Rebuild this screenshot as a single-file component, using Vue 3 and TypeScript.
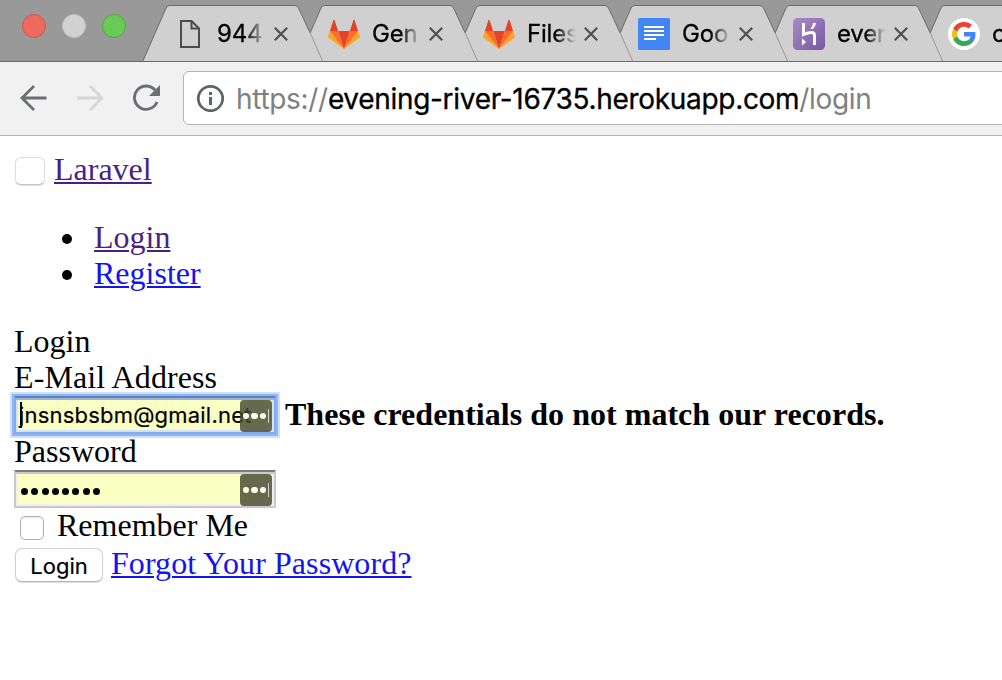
<template>
  <div class="window">
    <header class="tab-strip">
      <div class="lights">
        <span class="light red"></span>
        <span class="light grey"></span>
        <span class="light green"></span>
      </div>
      <div class="tabs">
        <div
          v-for="(tab, i) in tabs"
          :key="i"
          class="tab"
          :style="{ zIndex: tabs.length - i }"
        >
          <svg class="tab-shape" width="182" height="57" viewBox="0 0 182 57">
            <path d="M0.5 57 L24 3 Q25 0.5 28 0.5 H153 Q155 0.5 156.5 3 L181 57 Z" fill="#d0d0d0" />
            <path d="M0.5 57 L24 3 Q25 0.5 28 0.5 H153 Q155 0.5 156.5 3 L168 27.5" fill="none" stroke="#6c6c6c" />
            <path d="M168 27.5 L181 57" fill="none" stroke="#979797" />
            <path d="M0 56.5 H182" stroke="#6c6c6c" />
          </svg>
          <div class="tab-icon">
            <svg v-if="tab.icon === 'file'" width="32" height="32" viewBox="0 0 32 32">
              <path d="M8 3 H18.5 L26 10.500 V29 H8 Z" fill="none" stroke="#4c4c4c" stroke-width="2" />
              <path d="M18.500 3 V10.500 H26" fill="none" stroke="#4c4c4c" stroke-width="2" />
            </svg>
            <svg v-else-if="tab.icon === 'gitlab'" width="32" height="32" viewBox="0 0 32 32">
              <path d="M16 31 L21.9 13 H10.1 Z" fill="#e24329" />
              <path d="M16 31 L10.1 13 H1.9 Z M16 31 L21.9 13 H30.1 Z" fill="#fc6d26" />
              <path d="M1.9 13 L0.1 18.5 Q-0.1 19.3 0.6 19.8 L16 31 Z M30.1 13 L31.9 18.5 Q32.1 19.3 31.4 19.8 L16 31 Z" fill="#fca326" />
              <path d="M1.9 13 H10.1 L6.6 2.2 Q6 1 5.4 2.2 Z M30.1 13 H21.9 L25.4 2.2 Q26 1 26.6 2.2 Z" fill="#e24329" />
            </svg>
            <svg v-else-if="tab.icon === 'docs'" width="32" height="32" viewBox="0 0 32 32">
              <rect width="32" height="32" rx="1.5" fill="#4285f4" />
              <path d="M6 9 H26 M6 13 H26 M6 17 H26 M6 21 H18" stroke="#fff" stroke-width="2" />
            </svg>
            <svg v-else-if="tab.icon === 'heroku'" width="32" height="32" viewBox="0 0 32 32">
              <defs>
                <linearGradient id="heroku-bg" x1="0" y1="0" x2="1" y2="1">
                  <stop offset="0" stop-color="#a98bc9" />
                  <stop offset="1" stop-color="#79589f" />
                </linearGradient>
              </defs>
              <rect width="32" height="32" rx="4.5" fill="url(#heroku-bg)" />
              <path d="M10.5 5 V16.500 Q15 14.500 18.500 14.500 Q21.500 14.500 21.500 17.500 V27" fill="none" stroke="#fff" stroke-width="3" />
              <path d="M9 20.5 L13 24 L9 27.5 Z M20 5 H23 Q22.5 8.5 20 11 H17.5 Q19.6 8 20 5 Z" fill="#fff" />
            </svg>
            <svg v-else width="32" height="32" viewBox="0 0 32 32">
              <circle cx="16" cy="16" r="16" fill="#fff" />
              <g transform="translate(4 4)">
                <path fill="#4285f4" d="M23.5 12.3c0-.8-.1-1.6-.2-2.3H12v4.5h6.5c-.3 1.5-1.1 2.800-2.400 3.600v3h3.900c2.200-2.100 3.500-5.100 3.500-8.800z" />
                <path fill="#34a853" d="M12 24c3.200 0 6-1.100 8-2.900l-3.900-3c-1.100.7-2.500 1.200-4.100 1.200-3.100 0-5.800-2.100-6.700-5H1.300v3.100C3.300 21.300 7.300 24 12 24z" />
                <path fill="#fbbc05" d="M5.300 14.300c-.5-1.500-.5-3.100 0-4.600V6.600h-4c-1.700 3.400-1.700 7.400 0 10.800z" />
                <path fill="#ea4335" d="M12 4.700c1.800 0 3.300.6 4.600 1.800L20 3.100C17.900 1.200 15.200 0 12 0 7.300 0 3.300 2.700 1.300 6.600l4 3.100c.9-2.900 3.600-5 6.700-5z" />
              </g>
            </svg>
          </div>
          <span class="tab-title">{{ tab.title }}</span>
          <svg class="tab-close" width="14" height="14" viewBox="0 0 14 14">
            <path d="M0.8 0.8 L13.2 13.2 M13.2 0.8 L0.8 13.2" stroke="#505050" stroke-width="2.200" />
          </svg>
        </div>
      </div>
    </header>

    <div class="toolbar">
      <svg class="nav-icon" width="28" height="28" viewBox="0 0 28 28">
        <path d="M26.5 14 H2.5 M14 2 L2 14 L14 26" fill="none" stroke="#6b6e73" stroke-width="2.8" />
      </svg>
      <svg class="nav-icon" width="28" height="28" viewBox="0 0 28 28">
        <path d="M1.5 14 H25.5 M14 2 L26 14 L14 26" fill="none" stroke="#d6d6d6" stroke-width="2.8" />
      </svg>
      <svg class="nav-icon" width="28" height="28" viewBox="0 0 28 28">
        <path d="M23 6 A11.7 11.7 0 1 0 25 18" fill="none" stroke="#6b6e73" stroke-width="2.9" />
        <path d="M28 1 V12 H17 Z" fill="#6b6e73" />
      </svg>
      <div class="omnibox">
        <svg width="28" height="28" viewBox="0 0 28 28">
          <circle cx="14.5" cy="14.500" r="12.200" fill="none" stroke="#5f6368" stroke-width="2.8" />
          <path d="M14.500 8 V11 M14.500 13 V21" stroke="#5f6368" stroke-width="3" />
        </svg>
        <span class="url"><span>https://</span><b>evening-river-16735.herokuapp.com</b><span>/login</span></span>
      </div>
    </div>

    <main class="page">
      <div class="row">
        <button class="toggle" type="button"></button>
        <a class="visited" href="#">Laravel</a>
      </div>
      <ul class="menu">
        <li><a class="visited" href="#">Login</a></li>
        <li><a href="#">Register</a></li>
      </ul>
      <div class="row">Login</div>
      <div class="row label">E-Mail Address</div>
      <div class="row field-row">
        <div class="field focused">
          <i class="caret"></i>
          <span class="email">{{ email }}</span>
          <span class="badge"><i></i><i></i><i></i><em></em></span>
        </div>
        <strong>These credentials do not match our records.</strong>
      </div>
      <div class="row">Password</div>
      <div class="row field-row">
        <div class="field">
          <span class="dots"><i v-for="n in 8" :key="n"></i></span>
          <span class="badge"><i></i><i></i><i></i><em></em></span>
        </div>
      </div>
      <div class="row"><span class="checkbox"></span>Remember Me</div>
      <div class="row submit-row">
        <button class="submit" type="button">Login</button>
        <a class="forgot" href="#">Forgot Your Password?</a>
      </div>
    </main>
  </div>
</template>

<script setup lang="ts">
import { ref } from "vue";

interface Tab {
  icon: "file" | "gitlab" | "docs" | "heroku" | "google";
  title: string;
}

const tabs: Tab[] = [
  { icon: "file", title: "944" },
  { icon: "gitlab", title: "Gen" },
  { icon: "gitlab", title: "Files" },
  { icon: "docs", title: "Goo" },
  { icon: "heroku", title: "ever" },
  { icon: "google", title: "c" },
];

const email = ref("jnsnsbsbm@gmail.net");
</script>

<style>
body {
  margin: 0;
  overflow: hidden;
}
</style>

<style scoped>
.window {
  width: 1002px;
  height: 680px;
  overflow: hidden;
  background: #fff;
  color: #000;
  font-family: "Liberation Serif", serif;
  font-size: 32px;
}

/* tab strip */
.tab-strip {
  display: flex;
  box-sizing: border-box;
  height: 62px;
  padding-top: 5px;
  border-bottom: 1px solid #6c6c6c;
  background: #999;
}

.lights {
  display: flex;
  flex: none;
  gap: 16px;
  width: 120px;
  padding: 9px 0 0 22px;
}

.light {
  box-sizing: border-box;
  width: 24px;
  height: 24px;
  border: 1px solid #d5554b;
  border-radius: 50%;
  background: #ec6a5e;
}

.light.grey {
  border-color: #c0c0c0;
  background: #d1d1d1;
}

.light.green {
  border-color: #55a83c;
  background: #69cb56;
}

.tabs {
  display: flex;
  flex: none;
}

.tab {
  position: relative;
  display: flex;
  flex: none;
  align-items: center;
  box-sizing: border-box;
  width: 182px;
  height: 57px;
  margin-right: -27px;
  padding-left: 31px;
}

.tab-shape {
  position: absolute;
  top: 0;
  left: 0;
}

.tab-icon {
  position: relative;
  height: 32px;
  margin-top: 1px;
}

.tab-icon svg,
.omnibox svg {
  display: block;
}

.tab-title {
  position: relative;
  width: 52px;
  margin: 0 5px 0 12px;
  overflow: hidden;
  font: 24px/32px Inter, sans-serif;
  letter-spacing: -0.2px;
  white-space: nowrap;
  -webkit-text-stroke: 0.3px #000;
  -webkit-mask-image: linear-gradient(to right, #000 28px, transparent 49px);
  mask-image: linear-gradient(to right, #000 28px, transparent 49px);
}

.tab-close {
  position: relative;
  flex: none;
}

/* toolbar */
.toolbar {
  display: flex;
  align-items: center;
  box-sizing: border-box;
  height: 74px;
  padding: 0 0 2px 20px;
  border-bottom: 1px solid #b4b4b4;
  background: #f1f1f1;
}

.nav-icon {
  flex: none;
  margin-right: 28px;
}

.omnibox {
  display: flex;
  flex: 1;
  align-items: center;
  box-sizing: border-box;
  height: 54px;
  margin: 0 -8px 0 -5px;
  padding-left: 12px;
  border: 1px solid #b4b4b4;
  border-radius: 6px;
  background: #fff;
}

.url {
  margin: 2px 0 0 12px;
  color: #808080;
  font: 28px/36px Inter, sans-serif;
  letter-spacing: -0.31px;
  white-space: nowrap;
}

.url b {
  color: #000;
  font-weight: 400;
  -webkit-text-stroke: 0.3px #000;
}

/* page */
.page {
  padding: 15px 14px 0;
}

.row {
  display: flex;
  align-items: center;
  height: 36px;
  line-height: 36px;
  white-space: nowrap;
}

.label {
  letter-spacing: 0.1px;
}

a {
  color: #1414ee;
  text-decoration: underline;
  text-decoration-thickness: 2px;
  text-underline-offset: 2px;
}

a.visited {
  color: #4b1f86;
}

.forgot {
  letter-spacing: 0.07px;
}

.toggle {
  width: 30px;
  height: 28px;
  margin: 4px 9px 0 1px;
  padding: 0;
  border: 1px solid #dedede;
  border-bottom-color: #c4c4c4;
  border-radius: 6px;
  background: #fff;
  box-shadow: 0 1px 1px #ddd;
}

.menu {
  margin: 32px 0;
  padding: 0;
  line-height: 36px;
  list-style: none;
}

.menu li {
  display: flex;
  align-items: center;
  height: 36px;
}

.menu li::before {
  width: 10px;
  height: 10px;
  margin: 3px 22px 0 48px;
  border-radius: 50%;
  background: #000;
  content: "";
}

.field-row {
  height: 38px;
}

.field {
  position: relative;
  display: flex;
  align-items: center;
  box-sizing: border-box;
  width: 262px;
  height: 38px;
  margin-top: 2px;
  border: 2px solid #c9c9c9;
  border-top-color: #7c7c7c;
  background: #faffc3;
  box-shadow: inset 0 2px #c9c9c9, inset 0 0 0 2px #f0f0f0;
}

.field.focused {
  border-color: #84aaf0;
  border-top-color: #5c83c6;
  box-shadow: inset 0 2px #a0b3cf, inset 0 0 0 2px #d5e1f5, 0 0 0 2px #8fb5f5, 0 0 0 4px #cfe0fb;
}

.email {
  margin-left: 3px;
  font: 22px/30px Inter, sans-serif;
  letter-spacing: 0.2px;
  -webkit-text-stroke: 0.2px #000;
}

.caret {
  position: absolute;
  top: 4px;
  left: 4px;
  width: 2px;
  height: 26px;
  background: #000;
}

.badge {
  position: absolute;
  top: 2px;
  right: 2px;
  display: flex;
  align-items: center;
  justify-content: center;
  gap: 2px;
  width: 32px;
  height: 32px;
  border-radius: 4px;
  background: rgba(70, 72, 50, 0.82);
}

.badge i {
  width: 6.5px;
  height: 6.5px;
  border-radius: 50%;
  background: #fffff0;
}

.badge em {
  width: 1px;
  height: 14px;
  background: #ccc;
}

.dots {
  display: flex;
  gap: 3.3px;
  margin: 4px 0 0 5px;
}

.dots i {
  width: 7px;
  height: 7px;
  border-radius: 50%;
  background: #000;
}

strong {
  margin: -1px 0 0 9px;
  letter-spacing: 0.03px;
}

.checkbox {
  box-sizing: border-box;
  width: 24px;
  height: 24px;
  margin: 6px 13px 0 6px;
  border: 1px solid #b0b0b0;
  border-radius: 5px;
  background: #fff;
  box-shadow: inset 0 1px 2px #e4e4e4;
}

.submit-row {
  height: 40px;
}

.submit {
  box-sizing: border-box;
  width: 88px;
  height: 34px;
  margin: 4px 8px 0 1px;
  padding: 1px 0 0;
  border: 1px solid #d0d0d0;
  border-bottom-color: #b5b5b5;
  border-radius: 7px;
  background: #fff;
  box-shadow: 0 1px 1px #ddd;
  color: #000;
  font: 22px/30px Inter, sans-serif;
  -webkit-text-stroke: 0.2px #000;
}
</style>
